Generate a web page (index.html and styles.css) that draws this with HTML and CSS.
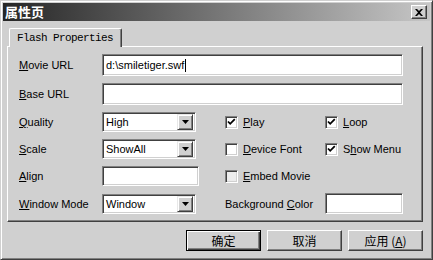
FILE: index.html
```html
<!DOCTYPE html>
<html lang="zh">
  <head>
    <meta charset="UTF-8" />
    <title>属性页</title>
    <link rel="stylesheet" href="styles.css">
  </head>
  <body>
    <div class="window">
      <div class="titlebar">
        <span class="title">属性页</span>
        <button class="close-btn">
          <svg width="8" height="7" viewBox="0 0 8 7"><path d="M0 0h2l2 2 2-2h2L5 3.5 8 7H6L4 5 2 7H0l3-3.5z" fill="#000"/></svg>
        </button>
      </div>

      <div class="content">
        <div class="tabs">
          <div class="tab active">Flash Properties</div>
        </div>

        <div class="tab-panel">
          <div class="form-grid">
            <span class="field-label"><u>M</u>ovie URL</span>
            <div class="textbox wide">d:\smiletiger.swf<span class="caret"></span></div>

            <span class="field-label"><u>B</u>ase URL</span>
            <div class="textbox wide"></div>

            <span class="field-label"><u>Q</u>uality</span>
            <div class="combo">
              <span class="combo-value">High</span>
              <span class="combo-arrow"><svg width="7" height="4" viewBox="0 0 7 4"><path d="M0 0h7L3.5 4z" fill="#000"/></svg></span>
            </div>
            <label class="check"><span class="check-box checked"><svg width="9" height="9" viewBox="0 0 9 9"><path d="M1 3.5l2.2 2.3L7.8 1.2" stroke="#000" stroke-width="1.8" fill="none"/></svg></span><span><u>P</u>lay</span></label>
            <label class="check"><span class="check-box checked"><svg width="9" height="9" viewBox="0 0 9 9"><path d="M1 3.5l2.2 2.3L7.8 1.2" stroke="#000" stroke-width="1.8" fill="none"/></svg></span><span><u>L</u>oop</span></label>

            <span class="field-label"><u>S</u>cale</span>
            <div class="combo">
              <span class="combo-value">ShowAll</span>
              <span class="combo-arrow"><svg width="7" height="4" viewBox="0 0 7 4"><path d="M0 0h7L3.5 4z" fill="#000"/></svg></span>
            </div>
            <label class="check"><span class="check-box"></span><span><u>D</u>evice Font</span></label>
            <label class="check"><span class="check-box checked"><svg width="9" height="9" viewBox="0 0 9 9"><path d="M1 3.5l2.2 2.3L7.8 1.2" stroke="#000" stroke-width="1.8" fill="none"/></svg></span><span>S<u>h</u>ow Menu</span></label>

            <span class="field-label"><u>A</u>lign</span>
            <div class="textbox short"></div>
            <label class="check"><span class="check-box dim"></span><span><u>E</u>mbed Movie</span></label>
            <span></span>

            <span class="field-label"><u>W</u>indow Mode</span>
            <div class="combo">
              <span class="combo-value">Window</span>
              <span class="combo-arrow"><svg width="7" height="4" viewBox="0 0 7 4"><path d="M0 0h7L3.5 4z" fill="#000"/></svg></span>
            </div>
            <span class="field-label">Background <u>C</u>olor</span>
            <div class="textbox color"></div>
          </div>
        </div>

        <div class="button-row">
          <button class="dlg-btn default">确定</button>
          <button class="dlg-btn">取消</button>
          <button class="dlg-btn">应用 (<u>A</u>)</button>
        </div>
      </div>
    </div>
  </body>
</html>
```

FILE: styles.css
```css
* {
  box-sizing: border-box;
}

body {
  margin: 0;
  background: #d0d0d0;
  font-family: "Liberation Sans", Arial, sans-serif;
  font-size: 11px;
  color: #000;
}

.window {
  width: 433px;
  height: 260px;
  padding: 2px;
  background: #d0d0d0;
  border: 1px solid;
  border-color: #d0d0d0 #404040 #404040 #d0d0d0;
  box-shadow: inset 1px 1px #fff, inset -1px -1px #808080;
  display: flex;
  flex-direction: column;
}

.titlebar {
  height: 18px;
  padding: 0 3px 0 2px;
  background: linear-gradient(to right, #262626, #c6c6c6);
  display: flex;
  align-items: center;
  justify-content: space-between;
}

.title {
  color: #fff;
  font-family: "Noto Sans CJK SC", sans-serif;
  font-weight: bold;
  font-size: 13px;
  line-height: 18px;
}

.close-btn {
  width: 16px;
  height: 14px;
  padding: 0;
  background: #d0d0d0;
  border: 1px solid;
  border-color: #fff #404040 #404040 #fff;
  box-shadow: inset -1px -1px #808080;
  display: flex;
  align-items: center;
  justify-content: center;
}

.content {
  flex: 1;
  padding: 7px 7px 0 4px;
  display: flex;
  flex-direction: column;
}

.tabs {
  display: flex;
  padding-left: 2px;
}

.tab {
  position: relative;
  z-index: 1;
  width: 113px;
  height: 19px;
  margin-bottom: -1px;
  padding: 2px 0 0 7px;
  background: #d0d0d0;
  border: 1px solid;
  border-bottom: none;
  border-color: #fff #404040 #fff #fff;
  border-radius: 2px 2px 0 0;
  box-shadow: inset -1px 0 #808080;
  font-family: "Liberation Mono", "Courier New", monospace;
  font-size: 11px;
  letter-spacing: -0.6px;
  line-height: 14px;
}

.tab-panel {
  height: 176px;
  padding: 7px 19px 0 11px;
  border: 1px solid;
  border-color: #fff #404040 #404040 #fff;
  box-shadow: inset -1px -1px #808080;
}

.form-grid {
  display: grid;
  grid-template-columns: 83px 123px 100px 78px;
  grid-template-rows: 22px 22px 20px 20px 20px 21px;
  row-gap: 7px;
  align-items: center;
}

.field-label {
  white-space: nowrap;
}

.textbox,
.combo,
.check-box {
  background: #fff;
  border: 1px solid;
  border-color: #808080 #fff #fff #808080;
  box-shadow: inset 1px 1px #404040, inset -1px -1px #d0d0d0;
}

.textbox {
  height: 100%;
  padding: 0 3px;
  display: flex;
  align-items: center;
}

.textbox.wide {
  grid-column: 2 / -1;
}

.textbox.short {
  width: 97px;
  height: 20px;
}

.textbox.color {
  width: 78px;
}

.caret {
  width: 1px;
  height: 13px;
  margin-left: 1px;
  background: #000;
}

.combo {
  width: 94px;
  height: 20px;
  padding: 2px;
  display: flex;
  align-items: center;
}

.combo-value {
  flex: 1;
  padding-left: 1px;
}

.combo-arrow {
  width: 16px;
  height: 16px;
  background: #d0d0d0;
  border: 1px solid;
  border-color: #e8e8e8 #404040 #404040 #e8e8e8;
  box-shadow: inset 1px 1px #fff, inset -1px -1px #808080;
  display: flex;
  align-items: center;
  justify-content: center;
}

.check {
  display: flex;
  align-items: center;
  gap: 5px;
  white-space: nowrap;
}

.check-box {
  width: 13px;
  height: 13px;
  display: flex;
  align-items: center;
  justify-content: center;
}

.check-box.dim {
  background: #ececec;
}

.button-row {
  margin-top: 8px;
  display: flex;
  justify-content: flex-end;
  gap: 6px;
}

.dlg-btn {
  width: 75px;
  height: 21px;
  padding: 0;
  background: #d0d0d0;
  border: 1px solid;
  border-color: #fff #404040 #404040 #fff;
  box-shadow: inset -1px -1px #808080;
  font-family: "Noto Sans CJK SC", sans-serif;
  font-size: 12px;
  line-height: 17px;
  color: #000;
}

.dlg-btn.default {
  border-color: #000;
  box-shadow: inset 1px 1px #fff, inset -1px -1px #404040, inset -2px -2px #808080;
}
```
